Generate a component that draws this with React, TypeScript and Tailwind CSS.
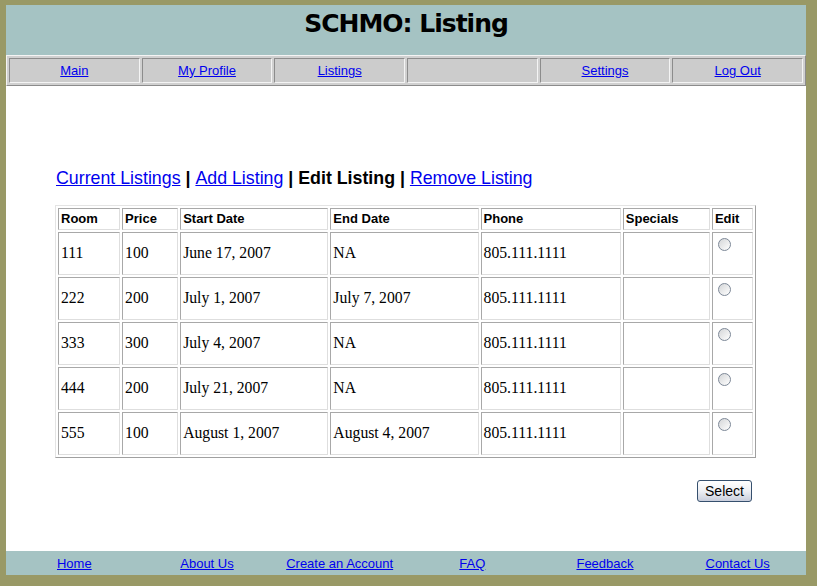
import React from "react";

const navItems = ["Main", "My Profile", "Listings", "", "Settings", "Log Out"];
const footerItems = ["Home", "About Us", "Create an Account", "FAQ", "Feedback", "Contact Us"];

const rows = [
  { room: "111", price: "100", start: "June 17, 2007", end: "NA", phone: "805.111.1111" },
  { room: "222", price: "200", start: "July 1, 2007", end: "July 7, 2007", phone: "805.111.1111" },
  { room: "333", price: "300", start: "July 4, 2007", end: "NA", phone: "805.111.1111" },
  { room: "444", price: "200", start: "July 21, 2007", end: "NA", phone: "805.111.1111" },
  { room: "555", price: "100", start: "August 1, 2007", end: "August 4, 2007", phone: "805.111.1111" },
];

const columns = [
  { label: "Room", w: "w-[62px]" },
  { label: "Price", w: "w-[56px]" },
  { label: "Start Date", w: "w-[148px]" },
  { label: "End Date", w: "w-[148px]" },
  { label: "Phone", w: "w-[140px]" },
  { label: "Specials", w: "w-[87px]" },
  { label: "Edit", w: "w-[41px]" },
];

// inset look for table cells
const cellBorder = "border border-t-[#a8a8a8] border-l-[#a8a8a8] border-b-[#dedede] border-r-[#dedede]";

function Radio() {
  return (
    <div className="w-[13px] h-[13px] rounded-full border border-[#7d8897] bg-gradient-to-br from-[#d4d6d8] to-white" />
  );
}

export default function App() {
  return (
    <div className="min-h-[586px] bg-[#999966] pl-[6px] pt-[5px] pb-[11px] font-['Liberation_Sans',Arial,sans-serif]">
      <div className="w-[800px] bg-white">
        {/* Header */}
        <div className="h-[50px] bg-[#a5c3c3] flex justify-center pt-[4px]">
          <h1 className="text-[25px] leading-[30px] font-bold tracking-[-1px] text-black font-['DejaVu_Sans',Verdana,sans-serif]">
            SCHMO: Listing
          </h1>
        </div>

        {/* Nav bar */}
        <div className="h-[31px] bg-[#d0d0d0] border border-t-[#f4f4f4] border-l-[#f4f4f4] border-b-[#8c8c8c] border-r-[#8c8c8c] p-[2px] flex gap-[2px]">
          {navItems.map((item, i) => (
            <div
              key={i}
              className="flex-1 h-[25px] bg-[#cccccc] border border-t-[#8c8c8c] border-l-[#8c8c8c] border-b-[#f4f4f4] border-r-[#f4f4f4] flex items-center justify-center"
            >
              {item && (
                <a href="#" className="text-[13px] text-[#0000ee] underline">
                  {item}
                </a>
              )}
            </div>
          ))}
        </div>

        {/* Content */}
        <div className="h-[465px] pl-[49px] pt-[82px]">
          <div className="ml-[1px] text-[17.8px] leading-[21px] text-black">
            <a href="#" className="text-[#0000ee] underline">Current Listings</a>
            <span className="font-bold"> | </span>
            <a href="#" className="text-[#0000ee] underline">Add Listing</a>
            <span className="font-bold"> | Edit Listing | </span>
            <a href="#" className="text-[#0000ee] underline">Remove Listing</a>
          </div>

          <table className="mt-[16px] w-[701px] table-fixed border-separate border-spacing-[2px] border border-t-[#e4e4e4] border-l-[#e4e4e4] border-b-[#a0a0a0] border-r-[#a0a0a0]">
            <thead>
              <tr>
                {columns.map((c) => (
                  <th
                    key={c.label}
                    className={`${c.w} ${cellBorder} h-[21px] px-[2px] text-left align-middle text-[13px] font-bold text-black`}
                  >
                    {c.label}
                  </th>
                ))}
              </tr>
            </thead>
            <tbody className="font-['Liberation_Serif','Times_New_Roman',serif] text-[15.7px] text-black">
              {rows.map((r) => (
                <tr key={r.room}>
                  <td className={`${cellBorder} h-[43px] px-[2px] align-middle`}>{r.room}</td>
                  <td className={`${cellBorder} h-[43px] px-[2px] align-middle`}>{r.price}</td>
                  <td className={`${cellBorder} h-[43px] px-[2px] align-middle`}>{r.start}</td>
                  <td className={`${cellBorder} h-[43px] px-[2px] align-middle`}>{r.end}</td>
                  <td className={`${cellBorder} h-[43px] px-[2px] align-middle`}>{r.phone}</td>
                  <td className={`${cellBorder} h-[43px] px-[2px] align-middle`}></td>
                  <td className={`${cellBorder} h-[43px] pl-[5px] pt-[5px] align-top`}>
                    <Radio />
                  </td>
                </tr>
              ))}
            </tbody>
          </table>

          <div className="w-[697px] flex justify-end mt-[22px]">
            <button className="h-[22px] w-[55px] rounded-[3px] border border-[#36506e] bg-gradient-to-b from-white via-[#eef0f4] to-[#c9cedc] text-[14px] text-black leading-none">
              Select
            </button>
          </div>
        </div>

        {/* Footer */}
        <div className="h-[24px] bg-[#a5c3c3] px-[2px] grid grid-cols-6 items-center">
          {footerItems.map((item) => (
            <div key={item} className="text-center">
              <a href="#" className="text-[13px] text-[#0000ee] underline">
                {item}
              </a>
            </div>
          ))}
        </div>
      </div>
    </div>
  );
}
